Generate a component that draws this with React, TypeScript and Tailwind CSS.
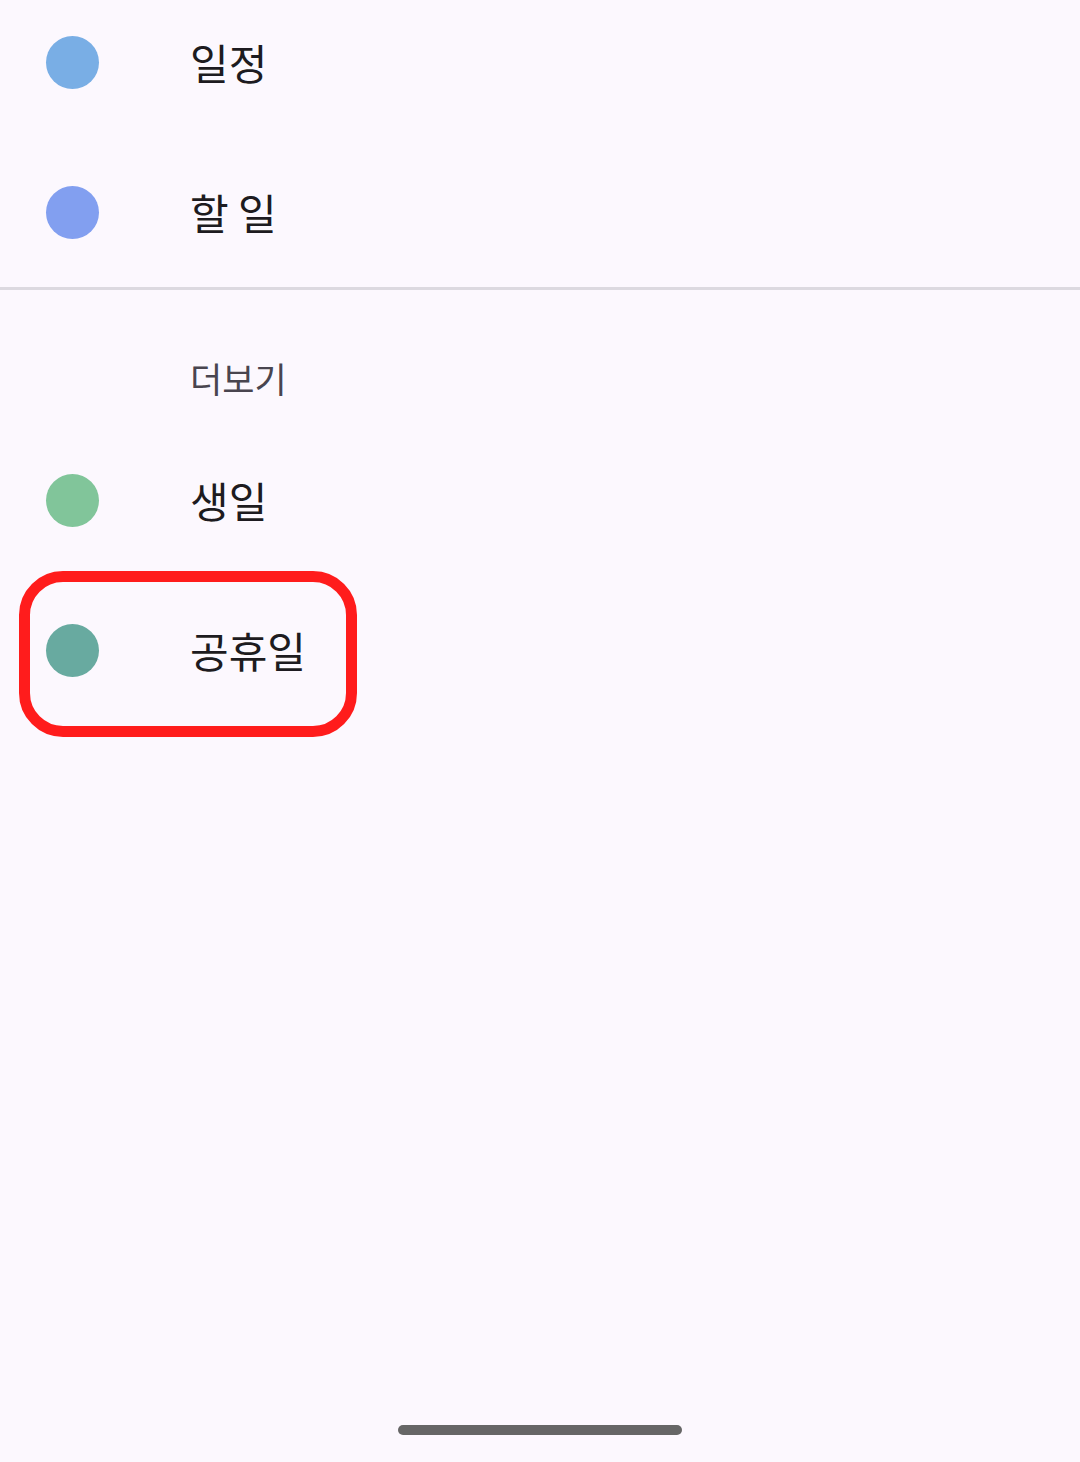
import React from 'react';

interface Calendar {
  name: string;
  color: string;
}

const top: Calendar[] = [
  { name: '일정', color: 'bg-[#79aee5]' },
  { name: '할 일', color: 'bg-[#829ff0]' },
];

const CalendarRow: React.FC<{ item: Calendar; className?: string; children?: React.ReactNode }> = ({ item, className = 'h-[150px]', children }) => (
  <div className={`relative flex items-center pl-[46px] ${className}`}>
    <div className={`w-[53px] h-[53px] rounded-full shrink-0 ${item.color}`}></div>
    <span className="ml-[91px] text-[42px] leading-none text-[#1d1b20]">{item.name}</span>
    {children}
  </div>
);

const App: React.FC = () => {
  return (
    <div
      className="w-[1080px] h-[1462px] bg-[#fcf8fe] flex flex-col overflow-hidden"
      style={{ fontFamily: '"Noto Sans CJK KR", "Noto Sans", sans-serif' }}
    >
      {/* Calendars */}
      <CalendarRow item={top[0]} className="h-[124px]" />
      <CalendarRow item={top[1]} className="h-[150px] mt-[13px]" />

      <div className="h-[3px] bg-[#dcd9e0]"></div>

      {/* More */}
      <div className="h-[135px] pt-[40px] flex items-center pl-[190px]">
        <span className="text-[35px] leading-none text-[#49454f]">더보기</span>
      </div>
      <CalendarRow item={{ name: '생일', color: 'bg-[#81c59a]' }} />
      <CalendarRow item={{ name: '공휴일', color: 'bg-[#68aaa0]' }}>
        <div className="absolute left-[19px] top-[-4px] w-[338px] h-[166px] border-[11px] border-[#ff1c1c] rounded-[44px]"></div>
      </CalendarRow>

      <div className="flex-1"></div>

      {/* Home indicator */}
      <div className="flex justify-center pb-[27px]">
        <div className="w-[284px] h-[10px] rounded-full bg-[#666666]"></div>
      </div>
    </div>
  );
};

export default App;
